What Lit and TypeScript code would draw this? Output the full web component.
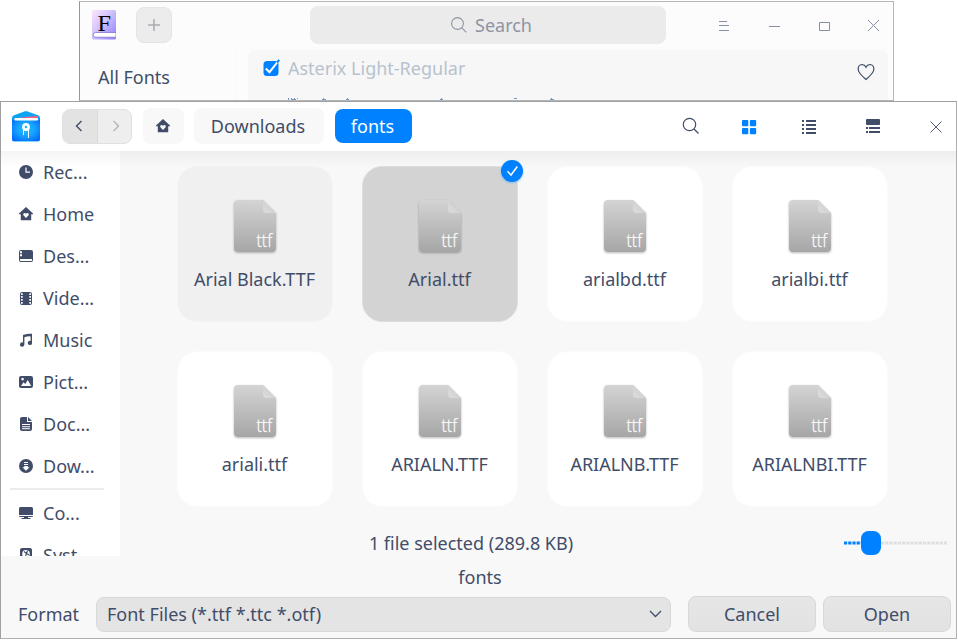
import { LitElement, html, svg, css } from "lit";
import { customElement, property } from "lit/decorators.js";
import { classMap } from "lit/directives/class-map.js";

const glyphs: Record<string, unknown> = {
  clock: svg`<path fill-rule="evenodd" d="M7 0a7 7 0 1 1 0 14A7 7 0 0 1 7 0ZM6.4 2.6V7.7H11V6.5H7.6V2.6Z"/>`,
  home: svg`<path fill-rule="evenodd" d="M7 0L14 6.4V7.2H12.2V13.2H1.8V7.2H0V6.4ZM7 11L9.6 8.2Q10.3 7 9.2 6.2Q7.9 5.5 7 6.8Q6.1 5.5 4.8 6.2Q3.7 7 4.4 8.2Z"/>`,
  desktop: svg`<path fill-rule="evenodd" d="M2 1H12Q14 1 14 3V11Q14 13 12 13H2Q0 13 0 11V3Q0 1 2 1ZM1 10V11.2Q1 12 2 12H12Q13 12 13 11.2V10ZM1 2.2V4.2H3V2.2ZM1 5.2V7.2H3V5.2Z"/>`,
  video: svg`<path fill-rule="evenodd" d="M3 1H11Q13 1 13 3V12Q13 14 11 14H3Q1 14 1 12V3Q1 1 3 1ZM2 2.2V4H3.7V2.2ZM2 5V6.8H3.7V5ZM2 8V9.8H3.7V8ZM2 11V12.8H3.7V11ZM10.3 2.2V4H12V2.2ZM10.3 5V6.8H12V5ZM10.3 8V9.8H12V8ZM10.3 11V12.8H12V11Z"/>`,
  music: svg`<path d="M4 2.1Q8 .6 13 .8V9.8A2.1 2.1 0 1 1 11.6 8V3.4Q8.500 3.200 5.400 4.200V11.500A2.200 2.200 0 1 1 4 9.500Z"/>`,
  picture: svg`<path fill-rule="evenodd" d="M2 1H12Q14 1 14 3V11Q14 13 12 13H2Q0 13 0 11V3Q0 1 2 1ZM2 11H12.200L8.700 5L6.300 9L4.500 7.200ZM3.600 2.800A1.300 1.300 0 1 0 3.610 2.800Z"/>`,
  document: svg`<path fill-rule="evenodd" d="M3 0H8V5H13V12Q13 14 11 14H3Q1 14 1 12V2Q1 0 3 0ZM3 7V8H11V7ZM3 9.200V10.200H11V9.200ZM3 11.300V12.300H11V11.300Z"/><path d="M9 0L13 4H9Z"/>`,
  download: svg`<path fill-rule="evenodd" d="M7 0a7 7 0 1 1 0 14A7 7 0 0 1 7 0ZM5 3V4H9V3ZM5 5V6H9V5ZM5.200 7V8.300H3.400L7 11.800L10.600 8.300H8.800V7Z"/>`,
  computer: svg`<path d="M1.500 1H12.500Q14 1 14 2.500V9H0V2.500Q0 1 1.500 1ZM0 10H14Q14 11 13 11H1Q0 11 0 10ZM5 11H9V12H11.500V13H2.500V12H5Z"/>`,
  disk: svg`<path d="M3 0H11Q13 0 13 2V12Q13 14 11 14H3Q1 14 1 12V2Q1 0 3 0Z"/><circle cx="7" cy="5.800" r="3.800" fill="#fff"/><path d="M5 3.500L7.500 5.500L6.500 8.500M8.500 2.500L7.500 5.500L10 7" fill="none" stroke="#414d68" stroke-width="1.100"/>`,
};

const places = [
  ["clock", "Rec..."], ["home", "Home"], ["desktop", "Des..."], ["video", "Vide..."],
  ["music", "Music"], ["picture", "Pict..."], ["document", "Doc..."], ["download", "Dow..."],
];
const devices = [["computer", "Co..."], ["disk", "Syst..."]];

const files = [
  { name: "Arial Black.TTF", state: "hovered" }, { name: "Arial.ttf", state: "selected" },
  { name: "arialbd.ttf" }, { name: "arialbi.ttf" }, { name: "ariali.ttf" },
  { name: "ARIALN.TTF" }, { name: "ARIALNB.TTF" }, { name: "ARIALNBI.TTF" },
];

const base = css`
  * { box-sizing: border-box; }
  svg { display: block; flex: none; }
`;

@customElement("font-manager-window")
class FontManagerWindow extends LitElement {
  static styles = [base, css`
    :host { display: flex; flex-direction: column; box-sizing: border-box; border: 1px solid #b6b6b6; border-left-color: #979797; background: #fcfcfc; overflow: hidden; }
    .bar { flex: none; height: 48px; display: flex; align-items: center; padding: 0 0 2px 12px; }
    .add { width: 36px; height: 36px; margin-left: 20px; border: 1px solid #e5e5e5; border-radius: 8px; background: #ececec; display: grid; place-items: center; }
    .search { width: 356px; height: 38px; margin-left: 138px; padding-left: 7px; border-radius: 8px; background: #ebebeb; display: flex; align-items: center; justify-content: center; gap: 8px; color: #8e94a3; }
    .controls { display: flex; margin: 2px 0 0 52px; gap: 38px; }
    .body { flex: 1; display: flex; }
    .nav { width: 157px; padding: 14px 18px; border-right: 1px solid #f8f8f8; line-height: 26px; }
    .entry { width: 640px; margin-left: 11px; border-radius: 8px 8px 0 0; background: #f7f7f7; }
    .row { display: flex; height: 38px; padding-left: 15px; color: #b7c2ce; }
    .row svg:first-child { margin-top: 9px; }
    .name { width: 569px; margin-left: 8px; line-height: 37px; }
    .heart { margin-top: 13px; }
    .sample { margin-top: 10px; }
  `];
  render() {
    return html`
      <div class="bar">
        <svg width="24" height="30"><defs><linearGradient id="g" x2="1" y2="1"><stop stop-color="#ffe6ff"/><stop offset=".45" stop-color="#d0c2fb"/><stop offset="1" stop-color="#8f7cff"/></linearGradient></defs>
          <rect width="24" height="29.500" rx="1.500" fill="url(#g)"/><path d="M24 22.500H3.500a2.300 2.300 0 0 0 0 4.700H24Z" fill="#fff" stroke="#7969c8" stroke-width=".7"/>
          <text x="5.400" y="21" font-family="Liberation Serif, serif" font-size="24" textLength="13.500" lengthAdjust="spacingAndGlyphs">F</text></svg>
        <div class="add"><svg width="12" height="12" stroke="#a8aab0" stroke-width="1.500"><path d="M0 6H12M6 0V12"/></svg></div>
        <div class="search"><svg width="16" height="16" fill="none" stroke="#8e94a3" stroke-width="1.100"><circle cx="6.500" cy="6.500" r="5.900"/><path d="M10.700 10.700L15.300 15.300"/></svg>Search</div>
        <div class="controls">
          <svg width="12" height="12" stroke="#858fa5"><path d="M1 1.500H9M1 5.500H11M1 10.500H11"/></svg>
          <svg width="12" height="12" stroke="#858fa5"><path d="M1 6.500H12"/></svg>
          <svg width="12" height="12" fill="none" stroke="#858fa5"><path d="M1.500 2.500H11.500V10.500H1.500Z"/></svg>
          <svg width="12" height="12" stroke="#858fa5"><path d="M0 0L11 11M11 0L0 11"/></svg>
        </div>
      </div>
      <div class="body">
        <div class="nav">All Fonts</div>
        <div class="entry">
          <div class="row">
            <svg width="17" height="18"><rect x=".5" y="2" width="15" height="15" rx="3.500" fill="#0081ff"/><path d="M2.800 9.500L6.500 13.200L14.500 3" fill="none" stroke="#fff" stroke-width="2"/><path d="M14 3.500L16.300 .8" stroke="#0081ff" stroke-width="2"/></svg>
            <span class="name">Asterix Light-Regular</span>
            <svg class="heart" width="18" height="18" fill="none" stroke="#414d68" stroke-width="1.200"><path d="M9 16.500Q2 10.500 1.400 7.500C.4 3.500 2.700 1.500 5 1.500Q7.800 1.600 9 4.200Q10.200 1.600 13 1.500C15.300 1.500 17.600 3.500 16.600 7.500Q16 10.500 9 16.500Z"/></svg>
          </div>
          <svg class="sample" width="320" height="3" stroke="#7896c2" stroke-width="1"><path d="M40 .5h1m2 0h1m2 0h1m2 0h1M40 1.500h1m2 0h5M75 .5h1m-2 1h4M99 .5h1m-2 1h3M193 .5h1m-2 1h3M266 .5h3M303 .5h1m-2 1h4"/></svg>
        </div>
      </div>`;
  }
}

@customElement("file-tile")
class FileTile extends LitElement {
  @property() name = "";
  @property() state = "";
  static styles = [base, css`
    :host { display: block; }
    .tile { position: relative; width: 156px; height: 156px; padding-top: 31px; border: 1px solid #fbfbfb; border-radius: 20px; background: #fff; display: flex; flex-direction: column; align-items: center; }
    .hovered { background: #f0f0f0; border-color: #f4f4f4; }
    .selected { background: #d3d3d3; border-color: #dedede; }
    .label { margin-top: 10px; padding-right: 1px; line-height: 26px; white-space: nowrap; }
    .mark { position: absolute; top: -7px; right: -6px; filter: drop-shadow(0 1px 1px #58aef899); }
  `];
  render() {
    return html`<div class=${classMap({ tile: true, [this.state || "plain"]: true })}>
      <svg width="50" height="58"><defs>
        <linearGradient id="p" x2="0" y2="1"><stop stop-color="#d4d4d4"/><stop offset="1" stop-color="#a6a6a6"/></linearGradient>
        <linearGradient id="f" y1="1" x2="1" y2="0"><stop stop-color="#dedede"/><stop offset=".6" stop-color="#d0d0d0"/></linearGradient>
        <filter id="s" x="-20%" y="-20%" width="140%" height="140%"><feDropShadow dx="0" dy="1" stdDeviation="1.300" flood-opacity=".28"/></filter></defs>
        <path filter="url(#s)" fill="url(#p)" d="M8 2H33L46 15V50a4 4 0 0 1-4 4H8a4 4 0 0 1-4-4V6a4 4 0 0 1 4-4Z"/>
        <path fill="url(#f)" d="M33 2L46 15H37a4 4 0 0 1-4-4Z"/>
        <text x="26.500" y="49" fill="#fff" stroke="#fff" stroke-width=".25" font-family="Open Sans, Noto Sans, sans-serif" font-weight="300" font-size="17.500" textLength="15.500" lengthAdjust="spacingAndGlyphs">ttf</text></svg>
      <div class="label">${this.name}</div>
      ${this.state === "selected" ? html`<svg class="mark" width="22" height="22"><circle cx="11" cy="11" r="11" fill="#0081ff"/><path d="M6.500 11.300L10 15L16.300 6.500" fill="none" stroke="#fff" stroke-width="1.500"/></svg>` : ""}
    </div>`;
  }
}

@customElement("open-dialog")
class OpenDialog extends LitElement {
  static styles = [base, css`
    :host { display: flex; flex-direction: column; box-sizing: border-box; border: 1px solid #a0a0a0; border-right-color: #b0b0b0; border-bottom-color: #b0b0b0; background: #f8f8f8; }
    .bar { flex: none; height: 49px; background: #fff; display: flex; align-items: center; padding: 0 0 1px 11px; }
    .history { display: flex; width: 70px; height: 35px; margin-left: 22px; border: 1px solid #e0e0e0; border-radius: 8px; overflow: hidden; background: #eee; }
    .step { flex: 1; display: grid; place-items: center; padding-left: 2px; }
    .back { background: #e3e3e3; border-right: 1px solid #dadada; padding: 0 3px 0 0; }
    .crumb { height: 36px; border-radius: 8px; background: #f8f8f8; display: grid; place-items: center; padding-right: 1px; }
    .house { width: 41px; margin-left: 11px; }
    .parent { width: 130px; margin-left: 10px; padding-right: 2px; }
    .here { width: 77px; height: 34px; margin-left: 11px; padding-right: 2px; background: #0081ff; color: #fff; }
    .tools { display: flex; align-items: center; margin-left: 269px; }
    .views { display: flex; gap: 46px; margin: 1px 0 0 43px; }
    .rows { margin-left: -2px; }
    .views svg:nth-child(2) { margin-left: -6px; width: 18px; }
    .close { margin: 1px 0 0 46px; }
    .main { flex: none; position: relative; height: 405px; display: flex; }
    .shade { position: absolute; inset: 0 0 auto; height: 17px; background: linear-gradient(#0000000a, #0000); }
    .places { width: 119px; background: #fff; overflow: hidden; }
    .place { height: 42px; display: flex; align-items: center; gap: 10px; padding-left: 18px; white-space: nowrap; }
    .place svg { fill: #414d68; }
    .rule { height: 2px; width: 94px; margin: 1px 0 2px 9px; background: #ececec; }
    .content { flex: 1; padding: 15px 0 0 57px; }
    .grid { display: grid; grid-template-columns: repeat(4, 156px); gap: 29px; }
    .status { margin-top: 22px; height: 27px; display: flex; align-items: center; }
    .summary { width: 588px; text-align: center; }
    .slider { margin-left: 79px; }
    .footer { flex: 1; display: flex; flex-direction: column; }
    .caption { margin-top: 8px; padding-left: 3px; text-align: center; line-height: 27px; }
    .actions { display: flex; align-items: center; margin-top: 5px; height: 36px; padding-left: 17px; }
    .format { width: 78px; }
    .button { height: 36px; width: 128px; border: 1px solid #d8d8d8; border-radius: 8px; background: linear-gradient(#e6e6e6, #e2e2e2); display: grid; place-items: center; margin-left: 7px; }
    .select { display: flex; justify-content: space-between; align-items: center; width: 575px; height: 35px; padding: 0 8px 0 10px; border: 1px solid #d9d9d9; border-radius: 8px; background: #e4e4e4; }
    .cancel { margin-left: 17px; }
  `];
  place([icon, label]: string[]) {
    return html`<div class="place"><svg width="14" height="14">${glyphs[icon]}</svg>${label}</div>`;
  }
  render() {
    return html`
      <div class="bar">
        <svg width="28" height="31"><defs><radialGradient id="b" cx=".5" cy=".45" r=".75"><stop stop-color="#21c2ff"/><stop offset=".45" stop-color="#159fff"/><stop offset="1" stop-color="#0058ff"/></radialGradient></defs>
          <path d="M0 7Q0 5 2 4.300L13 .3Q14 0 15 .3L26 4.300Q28 5 28 7V28Q28 30.500 26 30.500H2Q0 30.500 0 28Z" fill="#0ba4f5"/>
          <path d="M2 7.500Q12 6 24 5Q26 5 26 7V8H2Z" fill="#ff5f7c"/><path d="M0 8.500L3 9.500H25L28 8.500V27.500Q28 30 26 30H2Q0 30 0 27.500Z" fill="url(#b)"/>
          <rect x="2.500" y="7" width="23.500" height="2.500" rx="1" fill="#fff"/>
          <circle cx="14" cy="16" r="2.600" fill="none" stroke="#fff" stroke-width="2.600"/><path d="M11.500 19V24M16.500 18V27" stroke="#fff"/></svg>
        <div class="history">
          <div class="step back"><svg width="8" height="12" fill="none" stroke="#414d68" stroke-width="1.400"><path d="M6.500 1L1.500 6L6.500 11"/></svg></div>
          <div class="step"><svg width="8" height="12" fill="none" stroke="#b2b5bb" stroke-width="1.400"><path d="M1.500 1L6.500 6L1.500 11"/></svg></div>
        </div>
        <div class="crumb house"><svg width="14" height="14" fill="#414d68">${glyphs.home}</svg></div>
        <div class="crumb parent">Downloads</div>
        <div class="crumb here">fonts</div>
        <div class="tools">
          <svg width="18" height="18" fill="none" stroke="#414d68" stroke-width="1.200"><circle cx="8.500" cy="7.500" r="6.200"/><path d="M13 12L17.500 16.500"/></svg>
          <div class="views">
            <svg width="20" height="16" fill="#0081ff"><rect x="0" y="1" width="6.300" height="6.300" rx="1"/><rect x="7.900" y="1" width="6.300" height="6.300" rx="1"/><rect x="0" y="8.900" width="6.300" height="6.300" rx="1"/><rect x="7.900" y="8.900" width="6.300" height="6.300" rx="1"/></svg>
            <svg width="18" height="16" stroke="#414d68" stroke-width="2" shape-rendering="crispEdges"><path d="M0 2H2M4 2H14M0 6H2M4 6H14M0 10H2M4 10H14M0 14H2M4 14H14"/></svg>
            <svg class="rows" width="20" height="16" fill="#414d68"><rect x="2" y="0" width="14" height="6" rx="1"/><path d="M2 8h2v2H2zM5 8h11v2H5zM2 12h2v2H2zM5 12h11v2H5z"/></svg>
          </div>
          <svg class="close" width="12" height="12" stroke="#414d68" stroke-width=".9"><path d="M.5 .5L11.500 11.500M11.500 .5L.5 11.500"/></svg>
        </div>
      </div>
      <div class="main">
        <div class="places">${places.map(this.place)}<div class="rule"></div>${devices.map(this.place)}</div>
        <div class="content">
          <div class="grid">${files.map(f => html`<file-tile .name=${f.name} .state=${f.state ?? ""}></file-tile>`)}</div>
          <div class="status">
            <div class="summary">1 file selected (289.8 KB)</div>
            <svg class="slider" width="103" height="24"><path d="M0 12H17" stroke="#0081ff" stroke-width="3" stroke-dasharray="3.200 1"/><path d="M37 12H103" stroke="#dfdfdf" stroke-width="3" stroke-dasharray="3.200 1"/><rect x="17" width="20" height="24" rx="7.500" fill="#0081ff"/></svg>
          </div>
        </div>
        <div class="shade"></div>
      </div>
      <div class="footer">
        <div class="caption">fonts</div>
        <div class="actions">
          <span class="format">Format</span>
          <div class="select">Font Files (*.ttf *.ttc *.otf)<svg width="13" height="8" fill="none" stroke="#414d68" stroke-width="1.300"><path d="M1 1L6.500 6.500L12 1"/></svg></div>
          <div class="button cancel">Cancel</div><div class="button">Open</div>
        </div>
      </div>`;
  }
}

@customElement("app-root")
class AppRoot extends LitElement {
  static styles = css`
    :host { display: block; position: relative; width: 958px; height: 640px; overflow: hidden; background: #fff; color: #414d68; font: 18px/26px "Noto Sans", sans-serif; }
    .manager { position: absolute; left: 79px; top: 1px; width: 815px; height: 100px; }
    .dialog { position: absolute; left: 0; top: 101px; width: 957px; height: 538px; }
  `;
  render() {
    return html`<font-manager-window class="manager"></font-manager-window><open-dialog class="dialog"></open-dialog>`;
  }
}
